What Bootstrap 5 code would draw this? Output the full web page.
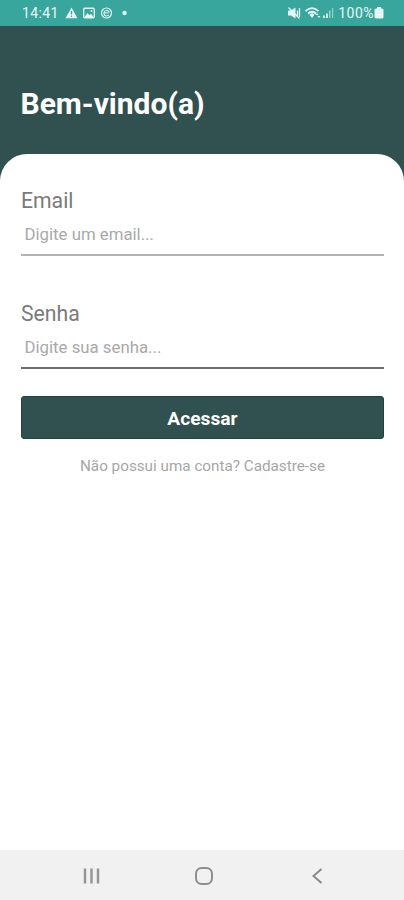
<!DOCTYPE html>
<html lang="pt-BR">
<head>
<meta charset="utf-8">
<meta name="viewport" content="width=device-width, initial-scale=1">
<title>Bem-vindo(a)</title>
<link href="https://cdn.jsdelivr.net/npm/bootstrap@5.3.0/dist/css/bootstrap.min.css" rel="stylesheet">
<style>
body{font-family:Roboto,"Liberation Sans",sans-serif;background:#30514f;height:900px;overflow:hidden}
svg{display:block;flex:none}
.status-bar{height:26px;background:#38a69c;color:#e6f8f5;font-size:14px;line-height:26px;padding:0 20px 0 22px}
.status-bar .clock{width:37px;margin-right:6px;letter-spacing:.4px}
.status-bar .pct{letter-spacing:.5px;margin-left:3px}
.hero{height:128px;padding:3px 20.5px 0}
.hero h1{font-size:30px;line-height:150px;font-weight:700;color:#fff;white-space:nowrap}
.panel{border-radius:27px 27px 0 0;padding:34px 20px 0 21px}
.field-label{font-size:21.2px;line-height:26px;color:#7a7a7a;display:block}
.field-input{font-size:16.8px;line-height:24px;height:42px;padding:1px 4px 2px 3.500px;border:0;border-bottom:2px solid #b4b4b4;border-radius:0;background:none;color:#555;margin-bottom:45px}
.field-input.dark-line{height:42px;border-bottom:2px solid #6c6c6c;margin-bottom:27px}
.field-input::placeholder{color:#a9a9a9;opacity:1}
.field-input:focus{box-shadow:none}
.btn-access,.btn-access:hover{background:#30514f;color:#fff;border:1px solid #1d4542;border-radius:3px;height:43px;font-size:19.2px;font-weight:700;padding:4px 0 0}
.signup{font-size:15.25px;line-height:20px;color:#a6a6a6;margin-top:17px;text-decoration:none}
.nav-keys{height:50px;background:#f1f1f1;padding:1px 0 0 4px}
.nav-keys a{width:113px}
</style>
<script src="https://cdn.jsdelivr.net/npm/bootstrap@5.3.0/dist/js/bootstrap.bundle.min.js"></script>
</head>
<body class="d-flex flex-column m-0">
<header class="status-bar d-flex align-items-center justify-content-between flex-shrink-0">
  <div class="d-flex align-items-center">
    <span class="clock">14:41</span>
    <svg width="62" height="14" viewBox="0 0 62 14" fill="currentColor">
      <path d="M6.500 1.500 12.500 12.200H.5Z"/><path d="M6.500 5v3.600M6.500 9.600v1.400" stroke="#38a69c" stroke-width="1.300"/>
      <rect x="18.700" y="2.200" width="10.600" height="9.600" rx="1.200" fill="none" stroke="currentColor" stroke-width="1.400"/><path d="m19.500 11 3-4 2 2.200 1.500-1.500 2.500 3.300Z"/><circle cx="26.500" cy="5" r="1"/>
      <circle cx="41.500" cy="7" r="5" fill="none" stroke="currentColor" stroke-width="1.200"/><path d="M43.800 8.800a2.700 2.700 0 1 1 .4-2.300M39.500 7h4" fill="none" stroke="currentColor" stroke-width="1.100"/>
      <circle cx="59.500" cy="7" r="2.200"/>
    </svg>
  </div>
  <div class="d-flex align-items-center">
    <svg width="47" height="14" viewBox="0 0 47 14" fill="currentColor">
      <path d="M0 4.500h3l4.500-3v11L3 9.500H0Z"/><path d="m.5 1.500 11 11M9.500 4.500v5M11.500 2v9" stroke="currentColor" stroke-width="1.300"/>
      <path d="M17.500 5.200q6.500-6 13 0M20 7.500q4-3.500 8 0" fill="none" stroke="currentColor" stroke-width="1.700"/><path d="m21.500 8.800 2.500-1.800 2.500 1.800L24 12ZM27.500 9l1.500-2 1.500 2ZM29.500 10h3L31 12Z"/>
      <path d="M35 9.500h1.800V12H35ZM38 7.500h1.800V12H38Z"/><path d="M41 4.500h1.500V12H41ZM44 2h1.200v10H44Z" opacity=".55"/>
    </svg>
    <span class="pct">100%</span>
    <svg width="10" height="14" viewBox="0 0 10 14" fill="currentColor"><path d="M3 1h4v1.500h1q1.500 0 1.500 1.500v7q0 1.500-1.500 1.500H2Q.5 12.500.5 11V4Q.5 2.500 2 2.500h1Z"/></svg>
  </div>
</header>
<section class="hero flex-shrink-0"><h1 class="m-0">Bem-vindo(a)</h1></section>
<main class="panel bg-white flex-grow-1">
  <form class="d-flex flex-column">
    <label class="field-label" for="email">Email</label>
    <input class="form-control field-input" id="email" type="email" placeholder="Digite um email...">
    <label class="field-label" for="senha">Senha</label>
    <input class="form-control field-input dark-line" id="senha" type="password" placeholder="Digite sua senha...">
    <button class="btn btn-access w-100" type="button">Acessar</button>
    <a class="signup text-center" href="#">Não possui uma conta? Cadastre-se</a>
  </form>
</main>
<nav class="nav-keys d-flex justify-content-center align-items-center flex-shrink-0">
  <a href="#" class="d-flex justify-content-center" aria-label="Recentes"><svg width="20" height="20" fill="none" stroke="#949494" stroke-width="2.400"><path d="M4 2.500v15M10.500 2.500v15M17 2.500v15"/></svg></a>
  <a href="#" class="d-flex justify-content-center" aria-label="Início"><svg width="20" height="20" fill="none" stroke="#8f8f8f" stroke-width="2"><rect x="2" y="2" width="16" height="16" rx="5.500"/></svg></a>
  <a href="#" class="d-flex justify-content-center" aria-label="Voltar"><svg width="20" height="20" fill="none" stroke="#8a8a8a" stroke-width="2"><path d="m14.500 3-8 7 8 7"/></svg></a>
</nav>
</body>
</html>
